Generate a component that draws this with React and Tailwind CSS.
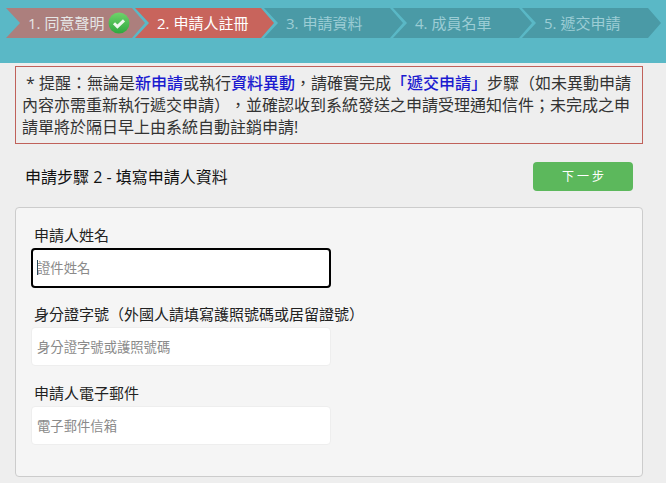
import React from "react";

const steps = [
  { label: "1. 同意聲明", tone: "bg-[#ac7f7d] text-[#e6e6e6]", done: true },
  { label: "2. 申請人註冊", tone: "bg-[#c8645c] text-white" },
  { label: "3. 申請資料", tone: "bg-[#4a9aa6] text-[#9ccdd5]" },
  { label: "4. 成員名單", tone: "bg-[#4a9aa6] text-[#9ccdd5]" },
  { label: "5. 遞交申請", tone: "bg-[#4a9aa6] text-[#9ccdd5]" },
];

const fields = [
  { label: "申請人姓名", placeholder: "證件姓名", focused: true },
  { label: "身分證字號（外國人請填寫護照號碼或居留證號）", placeholder: "身分證字號或護照號碼" },
  { label: "申請人電子郵件", placeholder: "電子郵件信箱" },
];

function CheckBadge() {
  return (
    <svg width="22" height="22" viewBox="0 0 22 22" className="ml-[4px] shrink-0">
      <defs>
        <linearGradient id="badge" x1="0" y1="0" x2="0" y2="1">
          <stop offset="0" stopColor="#6fd36a" />
          <stop offset="1" stopColor="#2fa83f" />
        </linearGradient>
      </defs>
      <circle cx="11" cy="11" r="10.5" fill="url(#badge)" />
      <path d="M6 11.2l3.4 3.4L16 8.4" fill="none" stroke="#eef8ee" strokeWidth="3" />
    </svg>
  );
}

function Step({ label, tone, done, first }) {
  return (
    <div
      className={`flex h-[30px] w-[139px] shrink-0 items-center pl-[22px] text-[15px] [clip-path:polygon(0_0,126px_0,139px_50%,126px_100%,0_100%,14px_50%)] ${tone} ${
        first ? "" : "ml-[-10px]"
      }`}
    >
      <span className="whitespace-nowrap">{label}</span>
      {done && <CheckBadge />}
    </div>
  );
}

function Field({ label, placeholder, focused }) {
  return (
    <div className={focused ? "mb-[15px]" : "mb-[16px]"}>
      <label className="mb-[2px] block h-[22px] whitespace-nowrap pl-[3px] text-[15px] leading-[22px] text-[#222]">
        {label}
      </label>
      <div className="relative">
        <input
          type="text"
          placeholder={placeholder}
          className={`block w-[300px] rounded-[4px] bg-white text-[13.33px] text-[#333] outline-none placeholder:text-[#8a8a8a] ${
            focused
              ? "h-[40px] border-2 border-black px-[4px]"
              : "h-[39px] border border-[#eeeeee] px-[5px]"
          }`}
        />
        {focused && <span className="absolute left-[6px] top-[12px] h-[15px] w-px bg-[#2a4a5a]" />}
      </div>
    </div>
  );
}

export default function App() {
  return (
    <div
      lang="zh-Hant"
      className="h-[483px] w-[666px] overflow-hidden bg-[#eeeeee] font-['Open_Sans','Noto_Sans_CJK_TC',sans-serif] text-[#333] [text-spacing-trim:space-all]"
    >
      <div className="flex h-[63px] bg-[#5ab8c6] pl-[6px] pt-[8px]">
        <div className="flex items-start">
          {steps.map((step, i) => (
            <Step key={step.label} {...step} first={i === 0} />
          ))}
        </div>
      </div>

      <div className="ml-[15px] mr-[23px] mt-[3px] h-[78px] border border-[#c0615a] pl-[6px] pr-[8px] pt-[5px] text-[16px] leading-[22px] text-[#333]">
        <span className="pl-[4px]">* 提醒：無論是</span>
        <span className="font-medium text-[#1a1ad0]">新申請</span>或執行
        <span className="font-medium text-[#1a1ad0]">資料異動</span>，請確實完成
        <span className="font-medium text-[#1a1ad0]">「遞交申請」</span>步驟（如未異動申請內容亦需重新執行遞交申請），並確認收到系統發送之申請受理通知信件；未完成之申請單將於隔日早上由系統自動註銷申請!
      </div>

      <div className="ml-[15px] mr-[23px] mt-[18px] flex h-[30px] items-center justify-between pl-[10px] pr-[10px]">
        <h2 className="text-[16px] font-normal text-[#111]">申請步驟 2 - 填寫申請人資料</h2>
        <button className="h-[29px] w-[100px] self-start rounded-[4px] bg-[#5cb85c] text-[12px] text-white">
          下 一 步
        </button>
      </div>

      <div className="ml-[15px] mr-[23px] mt-[15px] h-[270px] rounded-[4px] border border-[#cccccc] bg-[#f5f5f5] pl-[15px] pt-[16px]">
        {fields.map((f) => (
          <Field key={f.label} {...f} />
        ))}
      </div>
    </div>
  );
}
